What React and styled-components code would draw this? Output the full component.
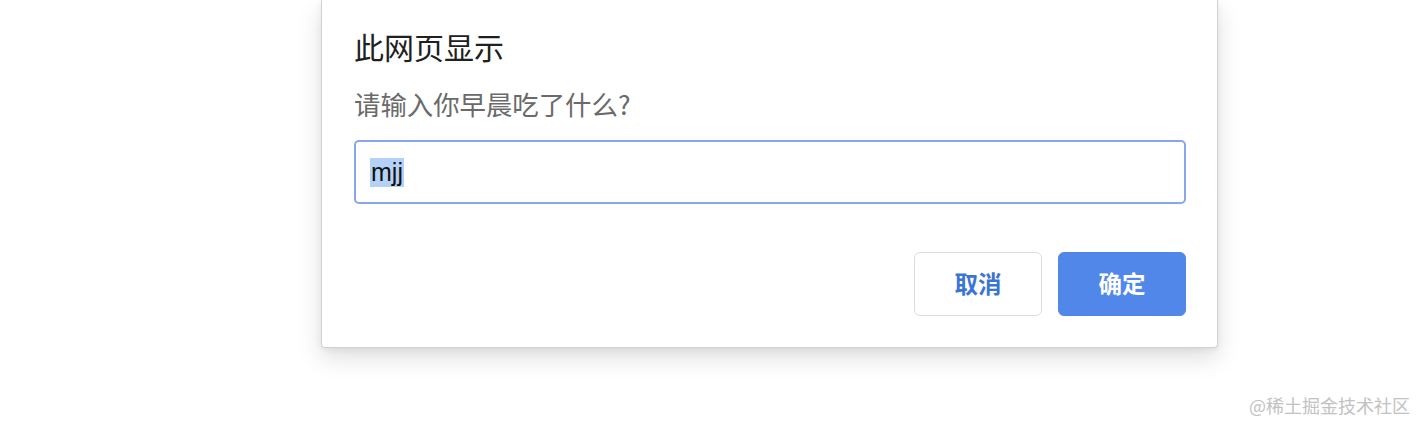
import React from "react";
import styled, { createGlobalStyle } from "styled-components";

const Global = createGlobalStyle`
  html, body { margin: 0; padding: 0; background: #fff; }
  body { font-family: "Liberation Sans", "Noto Sans CJK SC", sans-serif; }
`;

const Page = styled.div`
  width: 1416px;
  height: 422px;
  overflow: hidden;
  display: flex;
  flex-direction: column;
  padding-left: 321px;
  box-sizing: border-box;
`;

const Dialog = styled.div`
  width: 897px;
  box-sizing: border-box;
  background: #fff;
  border: 1px solid #d2d2d2;
  border-top: none;
  border-radius: 0 0 4px 4px;
  box-shadow: 0 10px 24px rgba(0, 0, 0, 0.13), 0 2px 6px rgba(0, 0, 0, 0.06);
  padding: 26px 31px 31px 32px;
  display: flex;
  flex-direction: column;
`;

const Title = styled.div`
  font-family: "Noto Sans CJK SC", sans-serif;
  font-size: 30px;
  line-height: 40px;
  color: #202020;
`;

const Message = styled.div`
  margin-top: 20px;
  font-family: "Noto Sans CJK SC", sans-serif;
  font-size: 26.4px;
  line-height: 36px;
  color: #6a6a6a;
`;

const Field = styled.div`
  margin-top: 18px;
  height: 64px;
  box-sizing: border-box;
  border: 2px solid #86a7ea;
  border-radius: 5px;
  display: flex;
  align-items: center;
  padding-left: 14px;
  font-family: "Liberation Sans", sans-serif;
  font-size: 25px;
  color: #111;
`;

const Selected = styled.span`
  background: #b4d2f7;
  line-height: 29px;
  padding: 0 1px;
`;

const Actions = styled.div`
  margin-top: 48px;
  display: flex;
  justify-content: flex-end;
  gap: 16px;
`;

const Button = styled.button`
  width: 128px;
  height: 64px;
  box-sizing: border-box;
  border-radius: 6px;
  font-family: "Noto Sans CJK SC", sans-serif;
  font-weight: 700;
  font-size: 23.5px;
  line-height: 28px;
  padding: 0 0 3px;
  cursor: pointer;
  border: 1px solid ${(p) => (p.$primary ? "#5087e8" : "#dcdcdc")};
  background: ${(p) => (p.$primary ? "#5087e8" : "#fff")};
  color: ${(p) => (p.$primary ? "#fff" : "#3a74d6")};
`;

const Watermark = styled.div`
  margin-top: 46px;
  align-self: flex-end;
  margin-right: 6px;
  font-family: "Noto Sans CJK SC", sans-serif;
  font-size: 18px;
  line-height: 22px;
  color: #c2c2c2;
`;

export default function App() {
  return (
    <>
      <Global />
      <Page>
        <Dialog>
          <Title>此网页显示</Title>
          <Message>请输入你早晨吃了什么?</Message>
          <Field>
            <Selected>mjj</Selected>
          </Field>
          <Actions>
            <Button>取消</Button>
            <Button $primary>确定</Button>
          </Actions>
        </Dialog>
        <Watermark>@稀土掘金技术社区</Watermark>
      </Page>
    </>
  );
}
